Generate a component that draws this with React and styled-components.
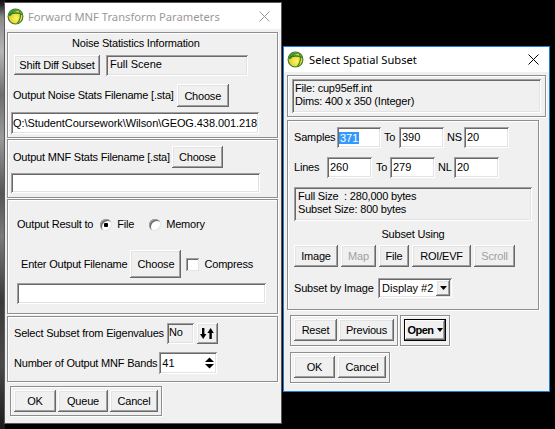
import React from 'react';
import styled, { createGlobalStyle, css } from 'styled-components';

const GlobalStyle = createGlobalStyle`
  html, body {
    margin: 0;
    padding: 0;
    background: #000;
  }
  body {
    font-family: "Liberation Sans", Arial, sans-serif;
    font-size: 11px;
    color: #000;
  }
  * { box-sizing: border-box; }
`;

const raised = css`
  background: #f0f0f0;
  border: none;
  box-shadow: inset -1px -1px #696969, inset 1px 1px #fff, inset -2px -2px #a0a0a0, inset 2px 2px #e3e3e3;
`;

const sunken = css`
  box-shadow: inset 1px 1px #a0a0a0, inset -1px -1px #fff, inset 2px 2px #696969, inset -2px -2px #e3e3e3;
`;

const Desktop = styled.div`
  position: relative;
  width: 555px;
  height: 429px;
  overflow: hidden;
  background: #000;
`;

const PhotoEdge = styled.div`
  position: absolute;
  left: 0;
  top: 0;
  width: 5px;
  height: 429px;
  background: linear-gradient(180deg, #111 0%, #222 1%, #8a8a8a 4%, #b5b5b5 12%, #6e6e6e 22%, #9a9a9a 32%,
    #555 45%, #7a7a7a 55%, #3a3a3a 70%, #4a4a4a 85%, #1a1a1a 100%);
`;

const Window = styled.div`
  position: absolute;
  left: ${p => p.$x}px;
  top: ${p => p.$y}px;
  width: ${p => p.$w}px;
  height: ${p => p.$h}px;
  border: 1px solid ${p => p.$border};
  background: #f0f0f0;
  display: flex;
  flex-direction: column;
  letter-spacing: -0.2px;
`;

const TitleBar = styled.div`
  flex-shrink: 0;
  height: ${p => p.$h}px;
  background: #fff;
  display: flex;
  align-items: center;
  padding-left: ${p => p.$pl}px;
`;

const TitleText = styled.span`
  flex: 1;
  margin-left: ${p => p.$ml}px;
  font-family: "Noto Sans", "Liberation Sans", sans-serif;
  font-size: 11.2px;
  letter-spacing: 0;
  color: ${p => (p.$inactive ? '#999' : '#000')};
`;

const CloseBox = styled.span`
  display: flex;
  margin-right: ${p => p.$mr}px;
  margin-top: ${p => p.$mt || 0}px;
`;

const Body = styled.div`
  display: flex;
  flex-direction: column;
  align-items: flex-start;
  padding: ${p => p.$pad};
`;

const Group = styled.div`
  display: flex;
  flex-direction: column;
  align-items: flex-start;
  flex-shrink: 0;
  width: ${p => (p.$w ? `${p.$w}px` : 'auto')};
  padding: ${p => p.$pad || '0'};
  margin-top: ${p => p.$mt || 0}px;
  margin-left: ${p => p.$ml || 0}px;
  border: 1px solid #8e8e8e;
  box-shadow: inset 1px 1px #fff, 1px 1px #fff;
`;

const Row = styled.div`
  display: flex;
  align-items: ${p => p.$align || 'center'};
  gap: ${p => p.$gap || 0}px;
  margin-top: ${p => p.$mt || 0}px;
  margin-left: ${p => p.$ml || 0}px;
`;

const Caption = styled.div`
  line-height: 13px;
  margin-top: ${p => p.$mt || 0}px;
  margin-left: ${p => p.$ml || 0}px;
  align-self: ${p => (p.$center ? 'center' : 'flex-start')};
`;

const Label = styled.span`
  flex-shrink: 0;
  white-space: pre;
  line-height: 13px;
  width: ${p => (p.$w ? `${p.$w}px` : 'auto')};
  padding-left: ${p => p.$pl || 0}px;
  margin-left: ${p => p.$ml || 0}px;
`;

const Button = styled.button`
  ${raised}
  flex-shrink: 0;
  width: ${p => p.$w}px;
  height: ${p => p.$h || 22}px;
  margin-left: ${p => p.$ml || 0}px;
  padding: 0;
  font: inherit;
  letter-spacing: inherit;
  color: ${p => (p.disabled ? '#a0a0a0' : '#000')};
  display: flex;
  align-items: center;
  justify-content: center;
  gap: 3px;
`;

const DefaultButton = styled(Button)`
  font-weight: bold;
  letter-spacing: -0.5px;
  box-shadow: inset 0 0 0 1px #000, inset -2px -2px #696969, inset 2px 2px #fff, inset -3px -3px #a0a0a0;
`;

const Field = styled.div`
  ${sunken}
  flex-shrink: 0;
  width: ${p => p.$w}px;
  height: ${p => p.$h}px;
  background: ${p => (p.$readOnly ? '#f0f0f0' : '#fff')};
  display: flex;
  align-items: ${p => (p.$top ? 'flex-start' : 'center')};
  padding: ${p => (p.$top ? '3px' : '0')} 1px 0 ${p => (p.$px ?? 3)}px;
  margin-left: ${p => p.$ml || 0}px;
  overflow: hidden;
  white-space: nowrap;
  letter-spacing: ${p => (p.$tight ? '-0.08px' : '0')};
  line-height: 13px;
`;

const Selected = styled.span`
  background: #3399ff;
  color: #fff;
  padding: 0 1px;
  line-height: 12px;
`;

const InfoBox = styled.div`
  ${sunken}
  width: ${p => p.$w}px;
  height: ${p => p.$h}px;
  margin-top: ${p => p.$mt || 0}px;
  margin-left: ${p => p.$ml || 0}px;
  padding: 3px 3px 0 ${p => p.$pl || 3}px;
  background: #f0f0f0;
  line-height: 13px;
  white-space: pre;
`;

const Radio = styled.span`
  flex-shrink: 0;
  width: 12px;
  height: 12px;
  border-radius: 50%;
  margin-left: ${p => p.$ml || 0}px;
  background: ${p => (p.$checked ? 'radial-gradient(circle, #000 0 2px, #fff 2.5px)' : '#fff')};
  box-shadow: inset 1px 1px #a0a0a0, inset -1px -1px #e3e3e3, inset 2px 2px #696969;
`;

const Checkbox = styled.span`
  flex-shrink: 0;
  width: 13px;
  height: 13px;
  margin-left: ${p => p.$ml || 0}px;
  background: #fff;
  box-shadow: inset 1px 1px #a0a0a0, inset -1px -1px #e3e3e3, inset 2px 2px #696969;
`;

const SpinArrows = styled.span`
  display: flex;
  margin-left: auto;
  margin-right: 1px;
`;

const Dropdown = styled.div`
  ${sunken}
  width: ${p => p.$w}px;
  height: 20px;
  background: #fff;
  display: flex;
  align-items: center;
  padding: 0 2px 0 4px;
  letter-spacing: 0;
`;

const DropArrow = styled.span`
  ${raised}
  margin-left: auto;
  width: 14px;
  height: 16px;
  display: flex;
  align-items: center;
  justify-content: center;
`;

function AppIcon({ id }) {
  return (
    <svg width="17" height="17" viewBox="0 0 16 16">
      <defs>
        <radialGradient id={id} cx="0.55" cy="0.62" r="0.7">
          <stop offset="0" stopColor="#fff66e" />
          <stop offset="0.6" stopColor="#e6d22a" />
          <stop offset="1" stopColor="#9bb230" />
        </radialGradient>
      </defs>
      <circle cx="8" cy="8" r="7" fill={`url(#${id})`} stroke="#3b7a2a" />
      <path d="M1.3 7 C2 2.5 7 0.5 11.5 2.2 C8 2.8 5 4.5 3.5 7.8 Z" fill="#3f9a3a" />
      <path d="M1.5 6.8 C4.5 4.5 10.5 4 14.6 6.2" fill="none" stroke="#2f7a2a" strokeWidth="1.4" />
      <path d="M11.6 2.2 C13.2 6 12.8 11 9.6 14.8" fill="none" stroke="#3f8a2a" strokeWidth="1.1" />
    </svg>
  );
}

function CloseGlyph({ color }) {
  return (
    <svg width="11" height="11" viewBox="0 0 11 11">
      <path d="M0.5 0.5 L10.5 10.5 M10.5 0.5 L0.5 10.5" stroke={color} strokeWidth="1" />
    </svg>
  );
}

function SwapGlyph() {
  return (
    <svg width="14" height="11" viewBox="0 0 14 11">
      <rect x="2" y="0" width="2.4" height="7" fill="#000" />
      <polygon points="0,6 6.4,6 3.2,11" fill="#000" />
      <rect x="9.4" y="4" width="2.4" height="7" fill="#000" />
      <polygon points="7.4,5 13.8,5 10.6,0" fill="#000" />
    </svg>
  );
}

function SpinGlyph() {
  return (
    <svg width="11" height="16" viewBox="0 0 11 16">
      <polygon points="1,7 10,7 5.5,2.5" fill="#000" />
      <polygon points="1,9 10,9 5.5,13.5" fill="#000" />
    </svg>
  );
}

function DownTri({ w = 7 }) {
  return (
    <svg width={w} height="4" viewBox={`0 0 ${w} 4`}>
      <polygon points={`0,0 ${w},0 ${w / 2},4`} fill="#000" />
    </svg>
  );
}

function MnfDialog() {
  return (
    <Window $x={4} $y={2} $w={278} $h={422} $border="#5a5a5a">
      <TitleBar $h={26} $pl={2}>
        <AppIcon id="mnf-globe" />
        <TitleText $ml={4} $inactive>Forward MNF Transform Parameters</TitleText>
        <CloseBox $mr={11} $mt={1}><CloseGlyph color="#9a9a9a" /></CloseBox>
      </TitleBar>
      <Body $pad="3px 0 0 2px">
        <Group $w={271} $pad="0 0 3px 0">
          <Caption $mt={4} $ml={64}>Noise Statistics Information</Caption>
          <Row $mt={5} $ml={6} $gap={6} $align="flex-start">
            <Button $w={86} $h={20}>Shift Diff Subset</Button>
            <Field $w={142} $h={21} $px={4} $readOnly $top>Full Scene</Field>
          </Row>
          <Row $mt={8} $ml={5} $gap={3}>
            <Label>Output Noise Stats Filename [.sta]</Label>
            <Button $w={52} $h={23}>Choose</Button>
          </Row>
          <Row $mt={5} $ml={3}>
            <Field $w={248} $h={22} $px={2} $tight>Q:\StudentCoursework\Wilson\GEOG.438.001.218</Field>
          </Row>
        </Group>

        <Group $w={271} $mt={1} $pad="0 0 4px 0">
          <Row $mt={6} $ml={5} $gap={2}>
            <Label>Output MNF Stats Filename [.sta]</Label>
            <Button $w={51} $h={22}>Choose</Button>
          </Row>
          <Row $mt={5} $ml={3}>
            <Field $w={249} $h={20} />
          </Row>
        </Group>

        <Group $w={271} $mt={1} $pad="0 0 9px 0">
          <Row $mt={18} $ml={9}>
            <Label>Output Result to</Label>
            <Radio $ml={7} $checked />
            <Label $ml={5}>File</Label>
            <Radio $ml={15} />
            <Label $ml={5}>Memory</Label>
          </Row>
          <Row $mt={19} $ml={13}>
            <Label>Enter Output Filename</Label>
            <Button $w={51} $h={28} $ml={3}>Choose</Button>
            <Checkbox $ml={5} />
            <Label $ml={5}>Compress</Label>
          </Row>
          <Row $mt={5} $ml={9}>
            <Field $w={249} $h={21} />
          </Row>
        </Group>

        <Group $w={271} $mt={2} $pad="0 0 7px 0">
          <Row $mt={6} $ml={6} $gap={3}>
            <Label>Select Subset from Eigenvalues</Label>
            <Field $w={27} $h={21} $px={2} $readOnly $top>No</Field>
            <Button $w={21} $h={21}><SwapGlyph /></Button>
          </Row>
          <Row $mt={8} $ml={6} $gap={2}>
            <Label>Number of Output MNF Bands</Label>
            <Field $w={58} $h={22}>
              41
              <SpinArrows><SpinGlyph /></SpinArrows>
            </Field>
          </Row>
        </Group>

        <Group $mt={4} $ml={3} $pad="3px">
          <Row $gap={2}>
            <Button $w={42}>OK</Button>
            <Button $w={50}>Queue</Button>
            <Button $w={48}>Cancel</Button>
          </Row>
        </Group>
      </Body>
    </Window>
  );
}

function SubsetDialog() {
  return (
    <Window $x={283} $y={46} $w={267} $h={346} $border="#1f7fd4">
      <TitleBar $h={25} $pl={3}>
        <AppIcon id="subset-globe" />
        <TitleText $ml={5}>Select Spatial Subset</TitleText>
        <CloseBox $mr={10}><CloseGlyph color="#000" /></CloseBox>
      </TitleBar>
      <Body $pad="3px 0 0 3px">
        <Group $w={259} $pad="3px 4px 3px 4px">
          <InfoBox $w={249} $h={34}>
            <div>File: cup95eff.int</div>
            <div>Dims: 400 x 350 (Integer)</div>
          </InfoBox>
        </Group>

        <Group $w={252} $mt={3} $pad="0 0 11px 0">
          <Row $mt={6} $ml={6}>
            <Label $w={43}>Samples</Label>
            <Field $w={44} $h={21} $px={2}><Selected>371</Selected></Field>
            <Label $w={18} $pl={3}>To</Label>
            <Field $w={45} $h={21}>390</Field>
            <Label $w={20} $pl={3}>NS</Label>
            <Field $w={45} $h={21}>20</Field>
          </Row>
          <Row $mt={9} $ml={6}>
            <Label $w={33}>Lines</Label>
            <Field $w={45} $h={21}>260</Field>
            <Label $w={18} $pl={4}>To</Label>
            <Field $w={45} $h={21}>279</Field>
            <Label $w={19} $pl={3}>NL</Label>
            <Field $w={45} $h={21}>20</Field>
          </Row>
          <InfoBox $w={238} $h={34} $mt={9} $ml={6} $pl={4}>
            <div>Full Size  : 280,000 bytes</div>
            <div>Subset Size: 800 bytes</div>
          </InfoBox>
          <Caption $mt={7} $center>Subset Using</Caption>
          <Row $mt={4} $ml={6} $gap={3}>
            <Button $w={44}>Image</Button>
            <Button $w={35} disabled>Map</Button>
            <Button $w={30}>File</Button>
            <Button $w={59}>ROI/EVF</Button>
            <Button $w={41} disabled>Scroll</Button>
          </Row>
          <Row $mt={11} $ml={6}>
            <Label $w={84}>Subset by Image</Label>
            <Dropdown $w={74}>
              Display #2
              <DropArrow><DownTri /></DropArrow>
            </Dropdown>
          </Row>
        </Group>

        <Row $mt={5} $ml={3} $gap={2} $align="flex-start">
          <Group $pad="3px 3px 4px 3px">
            <Row $gap={2}>
              <Button $w={43}>Reset</Button>
              <Button $w={55}>Previous</Button>
            </Row>
          </Group>
          <Group $pad="3px 3px 4px 3px">
            <DefaultButton $w={42}>
              Open
              <DownTri w={6} />
            </DefaultButton>
          </Group>
        </Row>

        <Group $mt={6} $ml={3} $pad="3px 3px 4px 3px">
          <Row $gap={3}>
            <Button $w={41}>OK</Button>
            <Button $w={48}>Cancel</Button>
          </Row>
        </Group>
      </Body>
    </Window>
  );
}

export default function App() {
  return (
    <>
      <GlobalStyle />
      <Desktop>
        <PhotoEdge />
        <MnfDialog />
        <SubsetDialog />
      </Desktop>
    </>
  );
}
